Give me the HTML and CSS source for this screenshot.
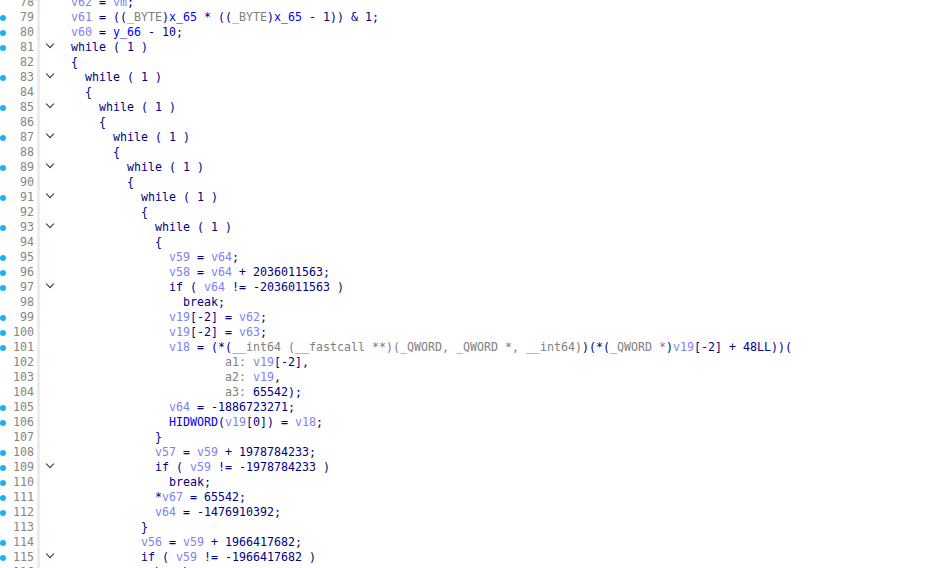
FILE: index.html
```html
<!DOCTYPE html>
<html>
<head>
<meta charset="utf-8">
<link rel="stylesheet" href="styles.css">
</head>
<body>
<div class="listing">
  <div class="ln"><span class="mk"></span><span class="num">78</span><span class="sep"></span><span class="fold"></span><span class="code"><span class="v">v62</span> = <span class="v">vm</span>;</span></div>
  <div class="ln dot"><span class="mk"></span><span class="num">79</span><span class="sep"></span><span class="fold"></span><span class="code"><span class="v">v61</span> = ((<span class="t">_BYTE</span>)<span class="g">x_65</span> * ((<span class="t">_BYTE</span>)<span class="g">x_65</span> - 1)) &amp; 1;</span></div>
  <div class="ln dot"><span class="mk"></span><span class="num">80</span><span class="sep"></span><span class="fold"></span><span class="code"><span class="v">v60</span> = <span class="g">y_66</span> - 10;</span></div>
  <div class="ln dot open"><span class="mk"></span><span class="num">81</span><span class="sep"></span><span class="fold"></span><span class="code">while ( 1 )</span></div>
  <div class="ln"><span class="mk"></span><span class="num">82</span><span class="sep"></span><span class="fold"></span><span class="code">{</span></div>
  <div class="ln dot open"><span class="mk"></span><span class="num">83</span><span class="sep"></span><span class="fold"></span><span class="code">  while ( 1 )</span></div>
  <div class="ln"><span class="mk"></span><span class="num">84</span><span class="sep"></span><span class="fold"></span><span class="code">  {</span></div>
  <div class="ln dot open"><span class="mk"></span><span class="num">85</span><span class="sep"></span><span class="fold"></span><span class="code">    while ( 1 )</span></div>
  <div class="ln"><span class="mk"></span><span class="num">86</span><span class="sep"></span><span class="fold"></span><span class="code">    {</span></div>
  <div class="ln dot open"><span class="mk"></span><span class="num">87</span><span class="sep"></span><span class="fold"></span><span class="code">      while ( 1 )</span></div>
  <div class="ln"><span class="mk"></span><span class="num">88</span><span class="sep"></span><span class="fold"></span><span class="code">      {</span></div>
  <div class="ln dot open"><span class="mk"></span><span class="num">89</span><span class="sep"></span><span class="fold"></span><span class="code">        while ( 1 )</span></div>
  <div class="ln"><span class="mk"></span><span class="num">90</span><span class="sep"></span><span class="fold"></span><span class="code">        {</span></div>
  <div class="ln dot open"><span class="mk"></span><span class="num">91</span><span class="sep"></span><span class="fold"></span><span class="code">          while ( 1 )</span></div>
  <div class="ln"><span class="mk"></span><span class="num">92</span><span class="sep"></span><span class="fold"></span><span class="code">          {</span></div>
  <div class="ln dot open"><span class="mk"></span><span class="num">93</span><span class="sep"></span><span class="fold"></span><span class="code">            while ( 1 )</span></div>
  <div class="ln"><span class="mk"></span><span class="num">94</span><span class="sep"></span><span class="fold"></span><span class="code">            {</span></div>
  <div class="ln dot"><span class="mk"></span><span class="num">95</span><span class="sep"></span><span class="fold"></span><span class="code">              <span class="v">v59</span> = <span class="v">v64</span>;</span></div>
  <div class="ln dot"><span class="mk"></span><span class="num">96</span><span class="sep"></span><span class="fold"></span><span class="code">              <span class="v">v58</span> = <span class="v">v64</span> + 2036011563;</span></div>
  <div class="ln dot open"><span class="mk"></span><span class="num">97</span><span class="sep"></span><span class="fold"></span><span class="code">              if ( <span class="v">v64</span> != -2036011563 )</span></div>
  <div class="ln"><span class="mk"></span><span class="num">98</span><span class="sep"></span><span class="fold"></span><span class="code">                break;</span></div>
  <div class="ln dot"><span class="mk"></span><span class="num">99</span><span class="sep"></span><span class="fold"></span><span class="code">              <span class="v">v19</span>[-2] = <span class="v">v62</span>;</span></div>
  <div class="ln dot"><span class="mk"></span><span class="num">100</span><span class="sep"></span><span class="fold"></span><span class="code">              <span class="v">v19</span>[-2] = <span class="v">v63</span>;</span></div>
  <div class="ln dot"><span class="mk"></span><span class="num">101</span><span class="sep"></span><span class="fold"></span><span class="code">              <span class="v">v18</span> = (*(<span class="t">__int64 (__fastcall **)(_QWORD, _QWORD *, __int64)</span>)(*(<span class="t">_QWORD *</span>)<span class="v">v19</span>[-2] + 48LL))(</span></div>
  <div class="ln"><span class="mk"></span><span class="num">102</span><span class="sep"></span><span class="fold"></span><span class="code">                      <span class="t">a1:</span> <span class="v">v19</span>[-2],</span></div>
  <div class="ln"><span class="mk"></span><span class="num">103</span><span class="sep"></span><span class="fold"></span><span class="code">                      <span class="t">a2:</span> <span class="v">v19</span>,</span></div>
  <div class="ln"><span class="mk"></span><span class="num">104</span><span class="sep"></span><span class="fold"></span><span class="code">                      <span class="t">a3:</span> 65542);</span></div>
  <div class="ln dot"><span class="mk"></span><span class="num">105</span><span class="sep"></span><span class="fold"></span><span class="code">              <span class="v">v64</span> = -1886723271;</span></div>
  <div class="ln dot"><span class="mk"></span><span class="num">106</span><span class="sep"></span><span class="fold"></span><span class="code">              <span class="g">HIDWORD</span>(<span class="v">v19</span>[0]) = <span class="v">v18</span>;</span></div>
  <div class="ln"><span class="mk"></span><span class="num">107</span><span class="sep"></span><span class="fold"></span><span class="code">            }</span></div>
  <div class="ln dot"><span class="mk"></span><span class="num">108</span><span class="sep"></span><span class="fold"></span><span class="code">            <span class="v">v57</span> = <span class="v">v59</span> + 1978784233;</span></div>
  <div class="ln dot open"><span class="mk"></span><span class="num">109</span><span class="sep"></span><span class="fold"></span><span class="code">            if ( <span class="v">v59</span> != -1978784233 )</span></div>
  <div class="ln dot"><span class="mk"></span><span class="num">110</span><span class="sep"></span><span class="fold"></span><span class="code">              break;</span></div>
  <div class="ln dot"><span class="mk"></span><span class="num">111</span><span class="sep"></span><span class="fold"></span><span class="code">            *<span class="v">v67</span> = 65542;</span></div>
  <div class="ln dot"><span class="mk"></span><span class="num">112</span><span class="sep"></span><span class="fold"></span><span class="code">            <span class="v">v64</span> = -1476910392;</span></div>
  <div class="ln"><span class="mk"></span><span class="num">113</span><span class="sep"></span><span class="fold"></span><span class="code">          }</span></div>
  <div class="ln dot"><span class="mk"></span><span class="num">114</span><span class="sep"></span><span class="fold"></span><span class="code">          <span class="v">v56</span> = <span class="v">v59</span> + 1966417682;</span></div>
  <div class="ln dot open"><span class="mk"></span><span class="num">115</span><span class="sep"></span><span class="fold"></span><span class="code">          if ( <span class="v">v59</span> != -1966417682 )</span></div>
  <div class="ln dot"><span class="mk"></span><span class="num">116</span><span class="sep"></span><span class="fold"></span><span class="code">            break;</span></div>
</div>
</body>
</html>
```
FILE: styles.css
```css
html, body {
  margin: 0;
  padding: 0;
  background: #ffffff;
  overflow: hidden;
}
.listing {
  margin-top: -5px;
  font-family: "DejaVu Sans Mono", "Liberation Mono", monospace;
  font-size: 11.63px;
  line-height: 15px;
  color: #000080;
}
.ln {
  display: flex;
  height: 15px;
  align-items: stretch;
}
.mk {
  width: 13px;
  flex: none;
  display: flex;
  align-items: center;
}
.dot .mk::before {
  content: "";
  width: 6px;
  height: 6px;
  border-radius: 50%;
  background: #1cb2f2;
}
.num {
  width: 21px;
  flex: none;
  text-align: right;
  color: #858585;
  margin-right: 3px;
}
.sep {
  width: 3px;
  flex: none;
  background: #ececec;
}
.fold {
  width: 31px;
  flex: none;
  position: relative;
}
.open .fold::before {
  content: "";
  position: absolute;
  left: 7px;
  top: 1px;
  width: 5px;
  height: 5px;
  border-right: 1.5px solid #333333;
  border-bottom: 1.5px solid #333333;
  transform: rotate(45deg);
}
.code {
  white-space: pre;
}
.v { color: #8080f4; }
.g { color: #0000ff; }
.t { color: #808080; }
```
